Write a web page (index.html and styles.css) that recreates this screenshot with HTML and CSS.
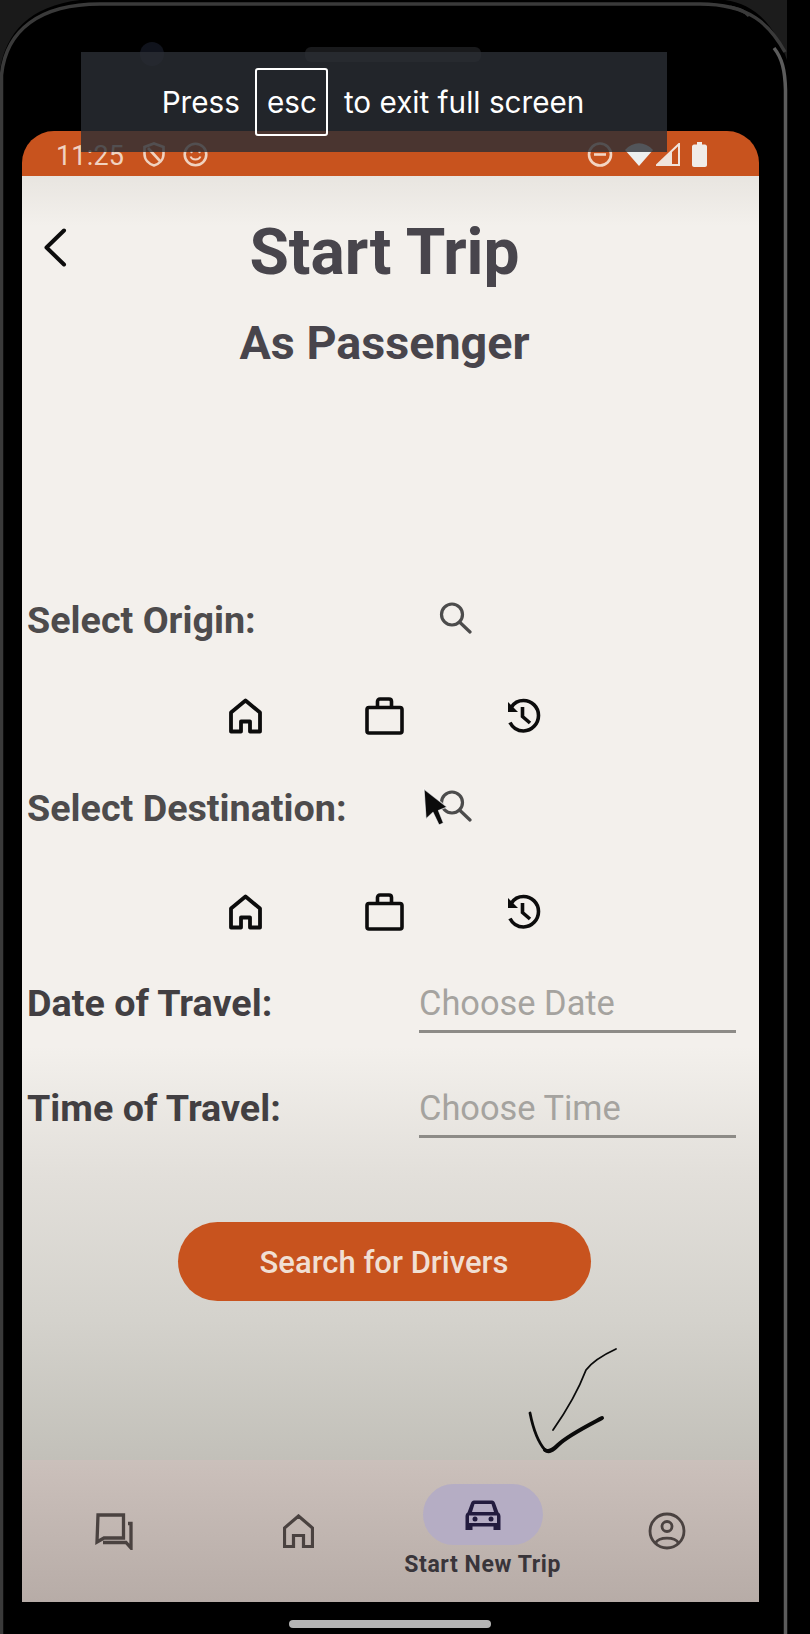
FILE: index.html
```html
<!DOCTYPE html>
<html lang="en">
<head>
<meta charset="utf-8">
<title>Start Trip</title>
<link rel="stylesheet" href="styles.css">
</head>
<body>
<div class="device">
  <svg class="bezel" width="810" height="1634" viewBox="0 0 810 1634" fill="none">
    <path d="M0 0H787V60C775 25 755 4 725 0Z" fill="#1c1c1c"/>
    <path d="M0 70C6 32 30 6 80 0H0Z" fill="#1a1a1a"/>
    <path d="M1.5 1634V75C6 30 40 4 100 4H700C750 4 770 25 785 52" stroke="#3a3a3a" stroke-width="3.5"/>
    <path d="M774 48C782 58 785 70 785.5 90V1634" stroke="#5c5c5c" stroke-width="3.5"/>
    <path d="M730 7C740 9 745 11 749 16" stroke="#3a3a3a" stroke-width="3"/>
    <circle cx="152" cy="54" r="12" fill="#10131c"/>
    <rect x="305" y="47" width="176" height="15" rx="6" fill="#191a1c"/>
  </svg>

  <div class="screen">
    <div class="status">
      <span class="clock">11:25</span>
      <svg class="st-shield" width="22" height="25" viewBox="0 0 22 25" fill="none" stroke="#f0d2c0" stroke-width="2.6"><path d="M11 1.5 20.5 5V12C20.5 18 16 22 11 23.5 6 22 1.5 18 1.5 12V5Z"/><path d="M5 6 17 19"/></svg>
      <svg class="st-face" width="25" height="25" viewBox="0 0 25 25" fill="none" stroke="#f0d2c0" stroke-width="2.6"><circle cx="12.5" cy="12.5" r="10.8"/><path d="M7.5 14.5C9 18.5 16 18.5 17.5 14.5" stroke-width="2"/><circle cx="8.5" cy="10" r="1.2" fill="#f0d2c0" stroke="none"/><circle cx="16.5" cy="10" r="1.2" fill="#f0d2c0" stroke="none"/></svg>
      <span class="status-space"></span>
      <svg width="26" height="25" viewBox="0 0 26 25" fill="none" stroke="#f3d5c3" stroke-width="2.6"><circle cx="13" cy="12.5" r="11"/><path d="M7 12.5H19"/></svg>
      <svg class="st-wifi" width="28" height="23" viewBox="0 0 28 23"><path d="M0 7C8-2 20-2 28 7L14 23Z" fill="#eef0ef"/></svg>
      <svg class="st-signal" width="24" height="23" viewBox="0 0 24 23" fill="none"><path d="M23 1V22H1Z" stroke="#f0e4dc" stroke-width="2"/><path d="M1 22 16 8V22Z" fill="#f0e4dc"/></svg>
      <svg class="st-batt" width="15" height="25" viewBox="0 0 15 25"><path d="M5 0H10V2.500H13C14 2.500 15 3.500 15 4.500V23C15 24 14 25 13 25H2C1 25 0 24 0 23V4.500C0 3.500 1 2.500 2 2.500H5Z" fill="#f0ece8"/></svg>
    </div>

    <main class="main">
      <header class="head">
        <svg class="back" width="25" height="39" viewBox="0 0 25 39" fill="none" stroke="#0c0c0c" stroke-width="4" stroke-linecap="round" stroke-linejoin="round"><path d="M21 2.500 3.500 19.500 21 36.500"/></svg>
        <h1 class="title">Start Trip</h1>
      </header>
      <h2 class="subtitle">As Passenger</h2>

      <div class="row row-origin">
        <span class="label">Select Origin:</span>
        <svg class="search" width="33" height="32" viewBox="0 0 33 32" fill="none" stroke="#4c4c4c" stroke-width="3.200" stroke-linecap="round"><circle cx="13" cy="12.500" r="10.500"/><path d="M20.500 20 31 30"/></svg>
      </div>
      <div class="icons icons-first">
        <span class="cell"><svg width="33" height="36" viewBox="0 0 33 36" fill="none" stroke="#0c0c0c" stroke-width="3.800" stroke-linejoin="round"><path d="M16.500 2.500 31 14.500V33.500H21V23.500H12V33.500H2V14.500Z"/></svg></span>
        <span class="cell"><svg width="39" height="38" viewBox="0 0 39 38" fill="none" stroke="#0c0c0c" stroke-width="3.600" stroke-linejoin="round"><rect x="2" y="10.500" width="35" height="25.500" rx="2"/><path d="M12.500 10.500V4.500C12.500 3 13.500 2 15 2H24C25.500 2 26.500 3 26.500 4.500V10.500"/></svg></span>
        <span class="cell cell-history"><svg width="36" height="36" viewBox="0 0 36 36" fill="none" stroke="#0c0c0c" stroke-width="3.600"><path d="M6.500 9C9 5 13.500 2.500 18.500 2.500 26.800 2.500 33.500 9.200 33.500 17.500S26.800 33 18.500 33C12.500 33 7.500 29.500 5 24.500"/><path d="M3 4V14H13Z" fill="#0c0c0c" stroke="none"/><path d="M17.500 9V18.500L25 25"/></svg></span>
      </div>

      <div class="row row-dest">
        <span class="label">Select Destination:</span>
        <svg class="search" width="33" height="32" viewBox="0 0 33 32" fill="none" stroke="#4c4c4c" stroke-width="3.200" stroke-linecap="round"><circle cx="13" cy="12.500" r="10.500"/><path d="M20.500 20 31 30"/></svg>
      </div>
      <div class="icons icons-second">
        <span class="cell"><svg width="33" height="36" viewBox="0 0 33 36" fill="none" stroke="#0c0c0c" stroke-width="3.800" stroke-linejoin="round"><path d="M16.500 2.500 31 14.500V33.500H21V23.500H12V33.500H2V14.500Z"/></svg></span>
        <span class="cell"><svg width="39" height="38" viewBox="0 0 39 38" fill="none" stroke="#0c0c0c" stroke-width="3.600" stroke-linejoin="round"><rect x="2" y="10.500" width="35" height="25.500" rx="2"/><path d="M12.500 10.500V4.500C12.500 3 13.500 2 15 2H24C25.500 2 26.500 3 26.500 4.500V10.500"/></svg></span>
        <span class="cell cell-history"><svg width="36" height="36" viewBox="0 0 36 36" fill="none" stroke="#0c0c0c" stroke-width="3.600"><path d="M6.500 9C9 5 13.500 2.500 18.500 2.500 26.800 2.500 33.500 9.200 33.500 17.500S26.800 33 18.500 33C12.500 33 7.500 29.500 5 24.500"/><path d="M3 4V14H13Z" fill="#0c0c0c" stroke="none"/><path d="M17.500 9V18.500L25 25"/></svg></span>
      </div>

      <div class="row-field row-date">
        <span class="label label-dark">Date of Travel:</span>
        <span class="field">Choose Date</span>
      </div>
      <div class="row-field row-time">
        <span class="label label-dark">Time of Travel:</span>
        <span class="field">Choose Time</span>
      </div>

      <button class="cta" type="button">Search for Drivers</button>
    </main>

    <nav class="nav">
      <div class="nav-item">
        <svg width="38" height="37" viewBox="0 0 38 37" fill="none" stroke="#4a4240" stroke-width="3.300"><path d="M3 2H28.500V25H9L2 29Z"/><path d="M8 29.500H31L36 35V10.500H33"/></svg>
      </div>
      <div class="nav-item">
        <svg width="31" height="34" viewBox="0 0 31 34" fill="none" stroke="#4a4240" stroke-width="3.200"><path d="M15.500 2 29.500 14V32.500H20.500V21.500H10.500V32.500H1.500V14Z"/></svg>
      </div>
      <div class="nav-item nav-active">
        <span class="pill">
          <svg width="36" height="32" viewBox="0 0 36 32"><path d="M9 1.500H27C28.500 1.500 29.500 2.500 30 4L33.500 13.500C35 14.500 35.500 16 35.500 17.500V31H28.500V27.500H7.500V31H.5V17.500C.5 16 1 14.500 2.500 13.500L6 4C6.500 2.500 7.500 1.500 9 1.500ZM9.500 5 7 13H29L26.500 5ZM4 16.500V24H32V16.500Z" fill="#221b3e" fill-rule="evenodd"/><circle cx="10" cy="20" r="2.500" fill="#221b3e"/><circle cx="26" cy="20" r="2.500" fill="#221b3e"/></svg>
        </span>
        <span class="nav-label">Start New Trip</span>
      </div>
      <div class="nav-item">
        <svg width="38" height="38" viewBox="0 0 38 38" fill="none" stroke="#4a4240" stroke-width="2.800"><circle cx="19" cy="19" r="17"/><circle cx="19" cy="14.500" r="5"/><path d="M7.500 31C11 24.500 27 24.500 30.500 31"/></svg>
      </div>
    </nav>
  </div>

  <div class="toast">
    <span>Press</span>
    <span class="key">esc</span>
    <span>to exit full screen</span>
  </div>

  <svg class="scribble" width="95" height="115" viewBox="0 0 95 115" fill="none" stroke="#0b0b0b" stroke-linecap="round" stroke-linejoin="round">
    <path d="M89 3C76 9 65 16 59 24 51 45 40 64 26 84" stroke-width="1.800"/>
    <path d="M3 67C6 82 11 96 18 104" stroke-width="2.800"/>
    <path d="M18 104C22 107 26 104 31 99 40 90 58 81 75 72" stroke-width="4"/>
  </svg>

  <svg class="pointer" width="30" height="42" viewBox="0 0 30 42"><path d="M3 2 5 32 12 25.500 18 38 22.500 36 17.500 23.500 26 20Z" fill="#0b0b0b" stroke="#ffffff" stroke-opacity=".7" stroke-width="1.200" stroke-linejoin="round"/></svg>

  <div class="home-bar"></div>
</div>
</body>
</html>
```

FILE: styles.css
```css
* {
  box-sizing: border-box;
}

html,
body {
  margin: 0;
  padding: 0;
  background: #000;
}

.device {
  position: relative;
  width: 810px;
  height: 1634px;
  padding: 131px 0 0 22px;
  overflow: hidden;
  background: #000;
  font-family: Roboto, "Liberation Sans", sans-serif;
}

.bezel {
  position: absolute;
  left: 0;
  top: 0;
}

.screen {
  position: relative;
  display: flex;
  flex-direction: column;
  width: 737px;
  height: 1471px;
}

.status {
  display: flex;
  align-items: center;
  flex: none;
  height: 45px;
  padding: 1px 52px 0 34px;
  border-radius: 32px 32px 0 0;
  background: #c8531e;
}

.clock {
  width: 87px;
  padding-top: 3px;
  color: #f1d2c0;
  font-size: 27px;
  letter-spacing: .2px;
}

.st-face {
  margin-left: 18px;
}

.status-space {
  flex: 1;
}

.st-wifi {
  margin-left: 12px;
}

.st-signal {
  margin-left: 3px;
}

.st-batt {
  margin-left: 12px;
}

.main {
  display: flex;
  flex-direction: column;
  flex: 1;
  padding: 36px 12px 0 5px;
  background: linear-gradient(180deg, #e8e5e0 0, #f3f0ec 50px, #f3f0ec 870px, #e2dfda 1000px, #d4d2cc 1144px, #c2c0b9 100%);
}

.head {
  display: grid;
  grid-template-columns: 1fr auto 1fr;
  align-items: center;
  height: 80px;
  margin-left: -5px;
}

.back {
  margin: -10px 0 0 21px;
}

.title {
  grid-column: 2;
  margin: 0;
  padding-top: 1px;
  color: #48454c;
  font-size: 64px;
  font-weight: 700;
  line-height: 80px;
}

.subtitle {
  height: 60px;
  margin: 21px 0 0 -5px;
  color: #48454c;
  font-size: 46.7px;
  font-weight: 700;
  line-height: 60px;
  text-align: center;
}

.row {
  display: grid;
  grid-template-columns: 412px auto;
  align-items: center;
  flex: none;
  height: 60px;
}

.row-origin {
  margin-top: 217px;
}

.row-dest {
  margin-top: 42px;
}

.label {
  margin-bottom: 1px;
  color: #4d4b4c;
  font-size: 37.7px;
  font-weight: 700;
  line-height: 44px;
  white-space: nowrap;
}

.label-dark {
  color: #423f42;
}

.search {
  margin-top: -4px;
}

.icons {
  display: flex;
  justify-content: center;
  flex: none;
  height: 40px;
  margin-left: -5px;
}

.icons-first {
  margin-top: 46px;
}

.icons-second {
  margin-top: 54px;
}

.cell {
  display: flex;
  align-items: center;
  justify-content: center;
  width: 139.5px;
}

.cell-history {
  padding-right: 2px;
}

.row-field {
  display: grid;
  grid-template-columns: 392px 317px;
  flex: none;
  height: 59px;
}

.row-date {
  margin-top: 42px;
}

.row-time {
  margin-top: 46px;
}

.row-field .label {
  align-self: center;
}

.field {
  display: flex;
  align-items: center;
  padding-top: 2px;
  border-bottom: 3px solid #8d8b87;
  color: #a5a39f;
  font-size: 34.4px;
  line-height: 50px;
}

.cta {
  flex: none;
  align-self: center;
  width: 413px;
  height: 79px;
  margin: 84px 0 0 -6px;
  padding: 2px 0 0;
  border: 0;
  border-radius: 40px;
  background: #c8531e;
  color: #f1dfd3;
  font-family: inherit;
  font-size: 31px;
  font-weight: 500;
}

.nav {
  display: grid;
  grid-template-columns: repeat(4, 1fr);
  align-items: center;
  flex: none;
  height: 142px;
  background: linear-gradient(180deg, #cbc0bb 0, #b7aca7 100%);
}

.nav-item {
  display: flex;
  flex-direction: column;
  align-items: center;
  justify-content: center;
}

.pill {
  display: flex;
  align-items: center;
  justify-content: center;
  width: 120px;
  height: 61px;
  border-radius: 31px;
  background: #b5adc4;
}

.nav-label {
  margin-top: 6px;
  color: #39353a;
  font-size: 23px;
  font-weight: 700;
  letter-spacing: .6px;
  line-height: 27px;
  white-space: nowrap;
}

.toast {
  position: absolute;
  left: 81px;
  top: 52px;
  display: flex;
  align-items: center;
  justify-content: center;
  gap: 15.5px;
  width: 586px;
  height: 100px;
  padding: 0 2px 1px 0;
  background: rgba(43, 46, 53, .8);
  color: #fff;
  font-family: Inter, "Liberation Sans", sans-serif;
  font-size: 29.7px;
}

.key {
  display: flex;
  align-items: center;
  justify-content: center;
  width: 73px;
  height: 68px;
  border: 2px solid #fff;
  border-radius: 3px;
}

.scribble {
  position: absolute;
  left: 527px;
  top: 1346px;
}

.pointer {
  position: absolute;
  left: 421px;
  top: 787px;
}

.home-bar {
  position: absolute;
  left: 289px;
  top: 1620px;
  width: 202px;
  height: 8px;
  border-radius: 4px;
  background: #b5b5b5;
}
```
